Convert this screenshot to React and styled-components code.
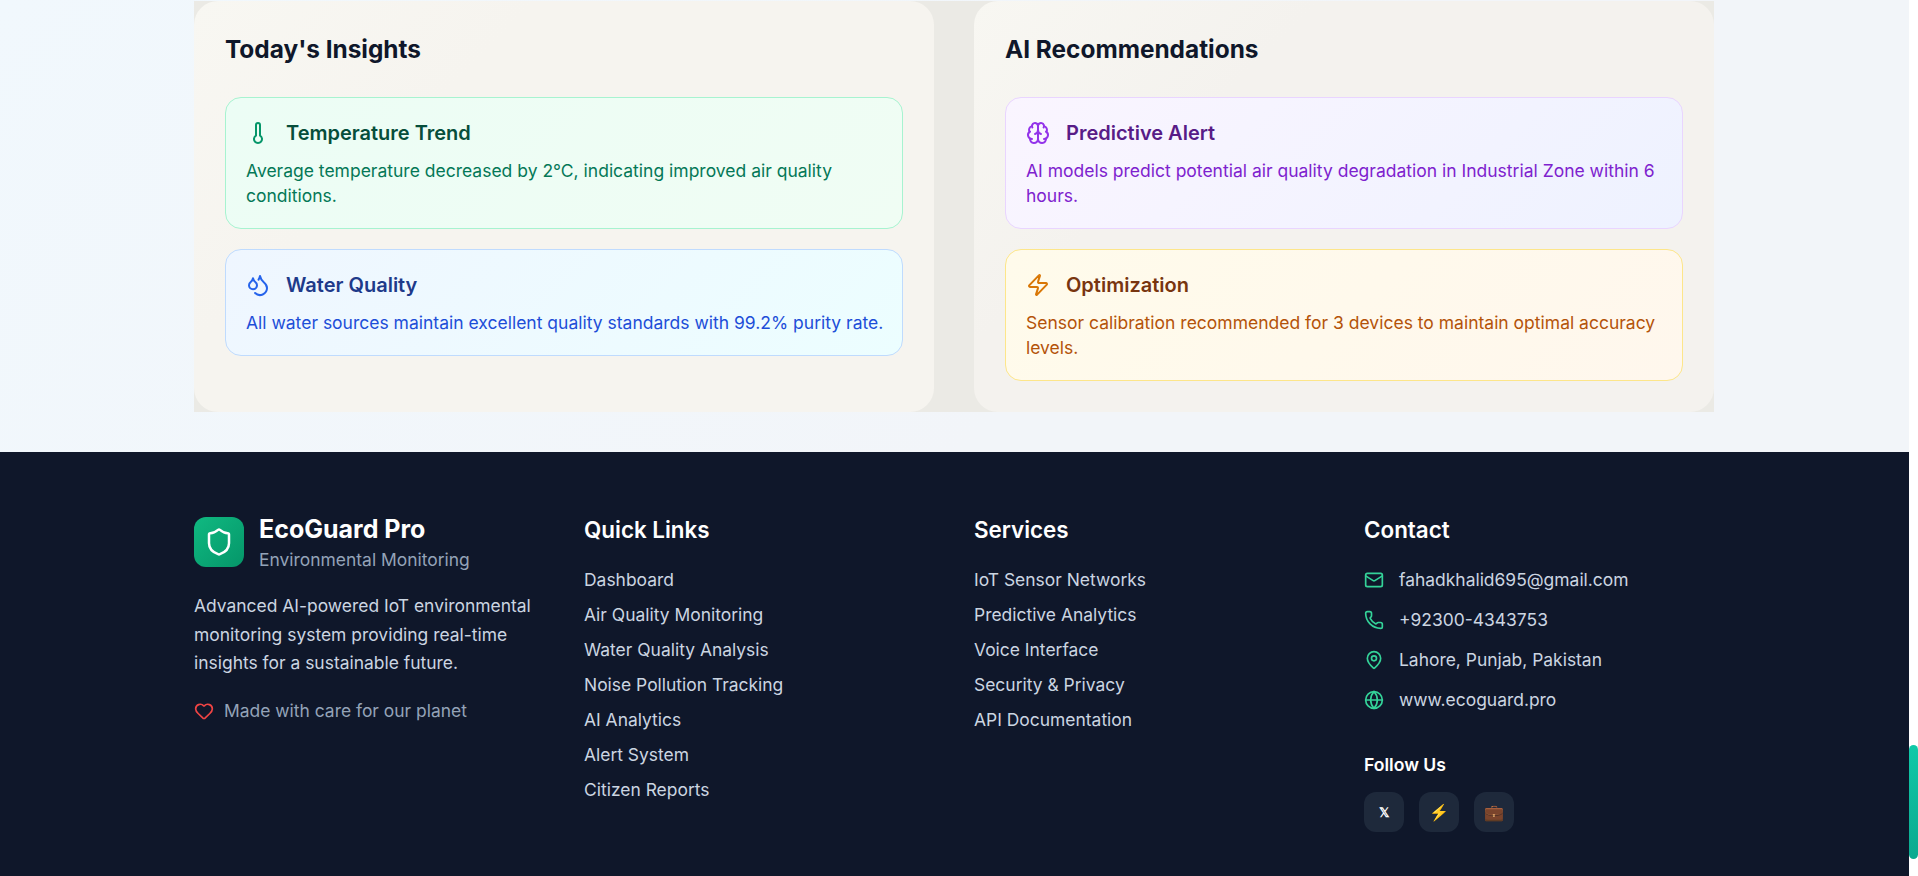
import React from "react";
import styled, { createGlobalStyle } from "styled-components";
import { Thermometer, Droplets, Brain, Zap, Shield, Heart, Mail, Phone, MapPin, Globe } from "lucide-react";

const GlobalStyle = createGlobalStyle`
  html, body {
    margin: 0;
    padding: 0;
    height: 876px;
    overflow: hidden;
  }
  body {
    background: #fff;
    font-family: Inter, "Noto Sans", sans-serif;
  }
`;

const Screen = styled.div`
  display: flex;
  width: 1918px;
  height: 876px;
  overflow: hidden;
`;
const Page = styled.div`
  width: 1909px;
  display: flex;
  flex-direction: column;
`;
const ScrollRail = styled.div`
  width: 9px;
  background: #fff;
  padding-top: 745px;
  box-sizing: border-box;
`;
const ScrollThumb = styled.div`
  height: 114px;
  border-radius: 5px;
  background: linear-gradient(180deg, #10c9a8, #0ba98f);
`;
const Main = styled.main`
  background: linear-gradient(135deg, #f1f8fd 0%, #f2f5f9 60%);
  padding: 1px 0 40px;
`;
const Container = styled.div`
  width: 1520px;
  margin-left: 194px;
`;
const PanelGrid = styled.section`
  display: grid;
  grid-template-columns: 1fr 1fr;
  gap: 40px;
  background: #ebeae5;
`;
const Panel = styled.div`
  background: linear-gradient(135deg, #f8f7f2 0%, ${(p) => p.$end} 30%);
  border-radius: 24px;
  padding: 31px;
  display: flex;
  flex-direction: column;
  gap: 30px;
`;
const PanelTitle = styled.h2`
  margin: 0;
  font-size: 24.4px;
  line-height: 35px;
  font-weight: 700;
  color: #0f172a;
`;
const CardList = styled.div`
  display: flex;
  flex-direction: column;
  gap: 20px;
`;

const tones = {
  green: { bg: "linear-gradient(135deg, #ecfdf5, #f0fdf4)", border: "#a7f3d0", icon: "#059669", title: "#064e3b", text: "#047857" },
  blue: { bg: "linear-gradient(135deg, #eff6ff, #ecfeff)", border: "#bfdbfe", icon: "#2563eb", title: "#1e3a8a", text: "#1d4ed8" },
  purple: { bg: "linear-gradient(135deg, #faf5ff, #eef2ff)", border: "#e9d5ff", icon: "#9333ea", title: "#581c87", text: "#7e22ce" },
  amber: { bg: "linear-gradient(135deg, #fffbeb, #fff7ed)", border: "#fde68a", icon: "#d97706", title: "#78350f", text: "#b45309" },
};

const Card = styled.article`
  border-radius: 16px;
  padding: 20px 16px 20px 20px;
  background: ${(p) => tones[p.$tone].bg};
  border: 1px solid ${(p) => tones[p.$tone].border};
`;
const CardHead = styled.div`
  display: flex;
  align-items: center;
  gap: 16px;
  padding-top: 1px;
  margin-bottom: 11px;
  color: ${(p) => tones[p.$tone].icon};
`;
const CardTitle = styled.h3`
  margin: 0;
  font-size: 20px;
  line-height: 28px;
  font-weight: 600;
  color: ${(p) => tones[p.$tone].title};
`;
const CardText = styled.p`
  margin: 0;
  font-size: 17.5px;
  line-height: 25px;
  color: ${(p) => tones[p.$tone].text};
`;

const Footer = styled.footer`
  flex: 1;
  background: #0f172a;
  padding-top: 63px;
`;
const FooterGrid = styled.div`
  display: grid;
  grid-template-columns: repeat(4, 350px);
  gap: 40px;
`;
const Brand = styled.div`
  display: flex;
  align-items: flex-start;
  gap: 15px;
  margin-bottom: 19px;
`;
const LogoBox = styled.div`
  width: 50px;
  height: 50px;
  margin-top: 2px;
  border-radius: 12px;
  background: linear-gradient(135deg, #10b981, #059669);
  display: flex;
  align-items: center;
  justify-content: center;
  color: #fff;
`;
const BrandName = styled.div`
  font-size: 25px;
  line-height: 28px;
  font-weight: 700;
  color: #fff;
`;
const BrandSub = styled.div`
  margin-top: 4px;
  font-size: 17.44px;
  line-height: 26px;
  color: #94a3b8;
`;
const About = styled.p`
  margin: 0 0 21px;
  font-size: 17.44px;
  line-height: 28.7px;
  color: #cbd5e1;
`;
const Care = styled.div`
  display: flex;
  align-items: center;
  gap: 10px;
  font-size: 17.44px;
  line-height: 24px;
  color: #94a3b8;
`;
const ColTitle = styled.h4`
  margin: 0 0 23px;
  font-size: 22.4px;
  line-height: 30px;
  font-weight: 600;
  color: #fff;
`;
const LinkList = styled.ul`
  list-style: none;
  margin: 0;
  padding: 0;
  display: flex;
  flex-direction: column;
  gap: 11px;
`;
const LinkItem = styled.li`
  font-size: 17.44px;
  line-height: 24px;
  color: #cbd5e1;
`;
const ContactList = styled.div`
  display: flex;
  flex-direction: column;
  gap: 16px;
  margin-bottom: 41px;
`;
const ContactRow = styled.div`
  display: flex;
  align-items: center;
  gap: 15px;
  font-size: 17.44px;
  line-height: 24px;
  color: #cbd5e1;
  svg {
    color: #34d399;
  }
`;
const FollowTitle = styled.h5`
  margin: 0 0 15px;
  font-size: 17.6px;
  line-height: 24px;
  font-weight: 600;
  color: #fff;
`;
const Socials = styled.div`
  display: flex;
  gap: 15px;
`;
const SocialBtn = styled.a`
  width: 40px;
  height: 40px;
  border-radius: 12px;
  background: #1e293b;
  display: flex;
  align-items: center;
  justify-content: center;
  font-size: ${(p) => p.$size}px;
  font-weight: ${(p) => p.$weight || 400};
  color: #fff;
`;

const insights = [
  { tone: "green", Icon: Thermometer, title: "Temperature Trend", text: "Average temperature decreased by 2°C, indicating improved air quality conditions." },
  { tone: "blue", Icon: Droplets, title: "Water Quality", text: "All water sources maintain excellent quality standards with 99.2% purity rate." },
];
const recommendations = [
  { tone: "purple", Icon: Brain, title: "Predictive Alert", text: "AI models predict potential air quality degradation in Industrial Zone within 6 hours." },
  { tone: "amber", Icon: Zap, title: "Optimization", text: "Sensor calibration recommended for 3 devices to maintain optimal accuracy levels." },
];
const quickLinks = ["Dashboard", "Air Quality Monitoring", "Water Quality Analysis", "Noise Pollution Tracking", "AI Analytics", "Alert System", "Citizen Reports"];
const services = ["IoT Sensor Networks", "Predictive Analytics", "Voice Interface", "Security & Privacy", "API Documentation"];
const contacts = [
  { Icon: Mail, text: "fahadkhalid695@gmail.com" },
  { Icon: Phone, text: "+92300-4343753" },
  { Icon: MapPin, text: "Lahore, Punjab, Pakistan" },
  { Icon: Globe, text: "www.ecoguard.pro" },
];

const InfoCard = ({ tone, Icon, title, text }) => (
  <Card $tone={tone}>
    <CardHead $tone={tone}>
      <Icon size={24} />
      <CardTitle $tone={tone}>{title}</CardTitle>
    </CardHead>
    <CardText $tone={tone}>{text}</CardText>
  </Card>
);

const App = () => (
  <Screen>
    <GlobalStyle />
    <Page>
      <Main>
        <Container>
          <PanelGrid>
            <Panel $end="#f6f4ef">
              <PanelTitle>Today's Insights</PanelTitle>
              <CardList>
                {insights.map((c) => <InfoCard key={c.title} {...c} />)}
              </CardList>
            </Panel>
            <Panel $end="#f4f2ee">
              <PanelTitle>AI Recommendations</PanelTitle>
              <CardList>
                {recommendations.map((c) => <InfoCard key={c.title} {...c} />)}
              </CardList>
            </Panel>
          </PanelGrid>
        </Container>
      </Main>
      <Footer>
        <Container>
          <FooterGrid>
            <div>
              <Brand>
                <LogoBox><Shield size={30} /></LogoBox>
                <div>
                  <BrandName>EcoGuard Pro</BrandName>
                  <BrandSub>Environmental Monitoring</BrandSub>
                </div>
              </Brand>
              <About>Advanced AI-powered IoT environmental monitoring system providing real-time insights for a sustainable future.</About>
              <Care><Heart size={20} color="#ef4444" />Made with care for our planet</Care>
            </div>
            <div>
              <ColTitle>Quick Links</ColTitle>
              <LinkList>
                {quickLinks.map((l) => <LinkItem key={l}>{l}</LinkItem>)}
              </LinkList>
            </div>
            <div>
              <ColTitle>Services</ColTitle>
              <LinkList>
                {services.map((l) => <LinkItem key={l}>{l}</LinkItem>)}
              </LinkList>
            </div>
            <div>
              <ColTitle>Contact</ColTitle>
              <ContactList>
                {contacts.map(({ Icon, text }) => (
                  <ContactRow key={text}><Icon size={20} />{text}</ContactRow>
                ))}
              </ContactList>
              <FollowTitle>Follow Us</FollowTitle>
              <Socials>
                <SocialBtn $size={13} $weight={700}>𝕏</SocialBtn>
                <SocialBtn $size={16}>⚡</SocialBtn>
                <SocialBtn $size={16}>💼</SocialBtn>
              </Socials>
            </div>
          </FooterGrid>
        </Container>
      </Footer>
    </Page>
    <ScrollRail><ScrollThumb /></ScrollRail>
  </Screen>
);

export default App;
